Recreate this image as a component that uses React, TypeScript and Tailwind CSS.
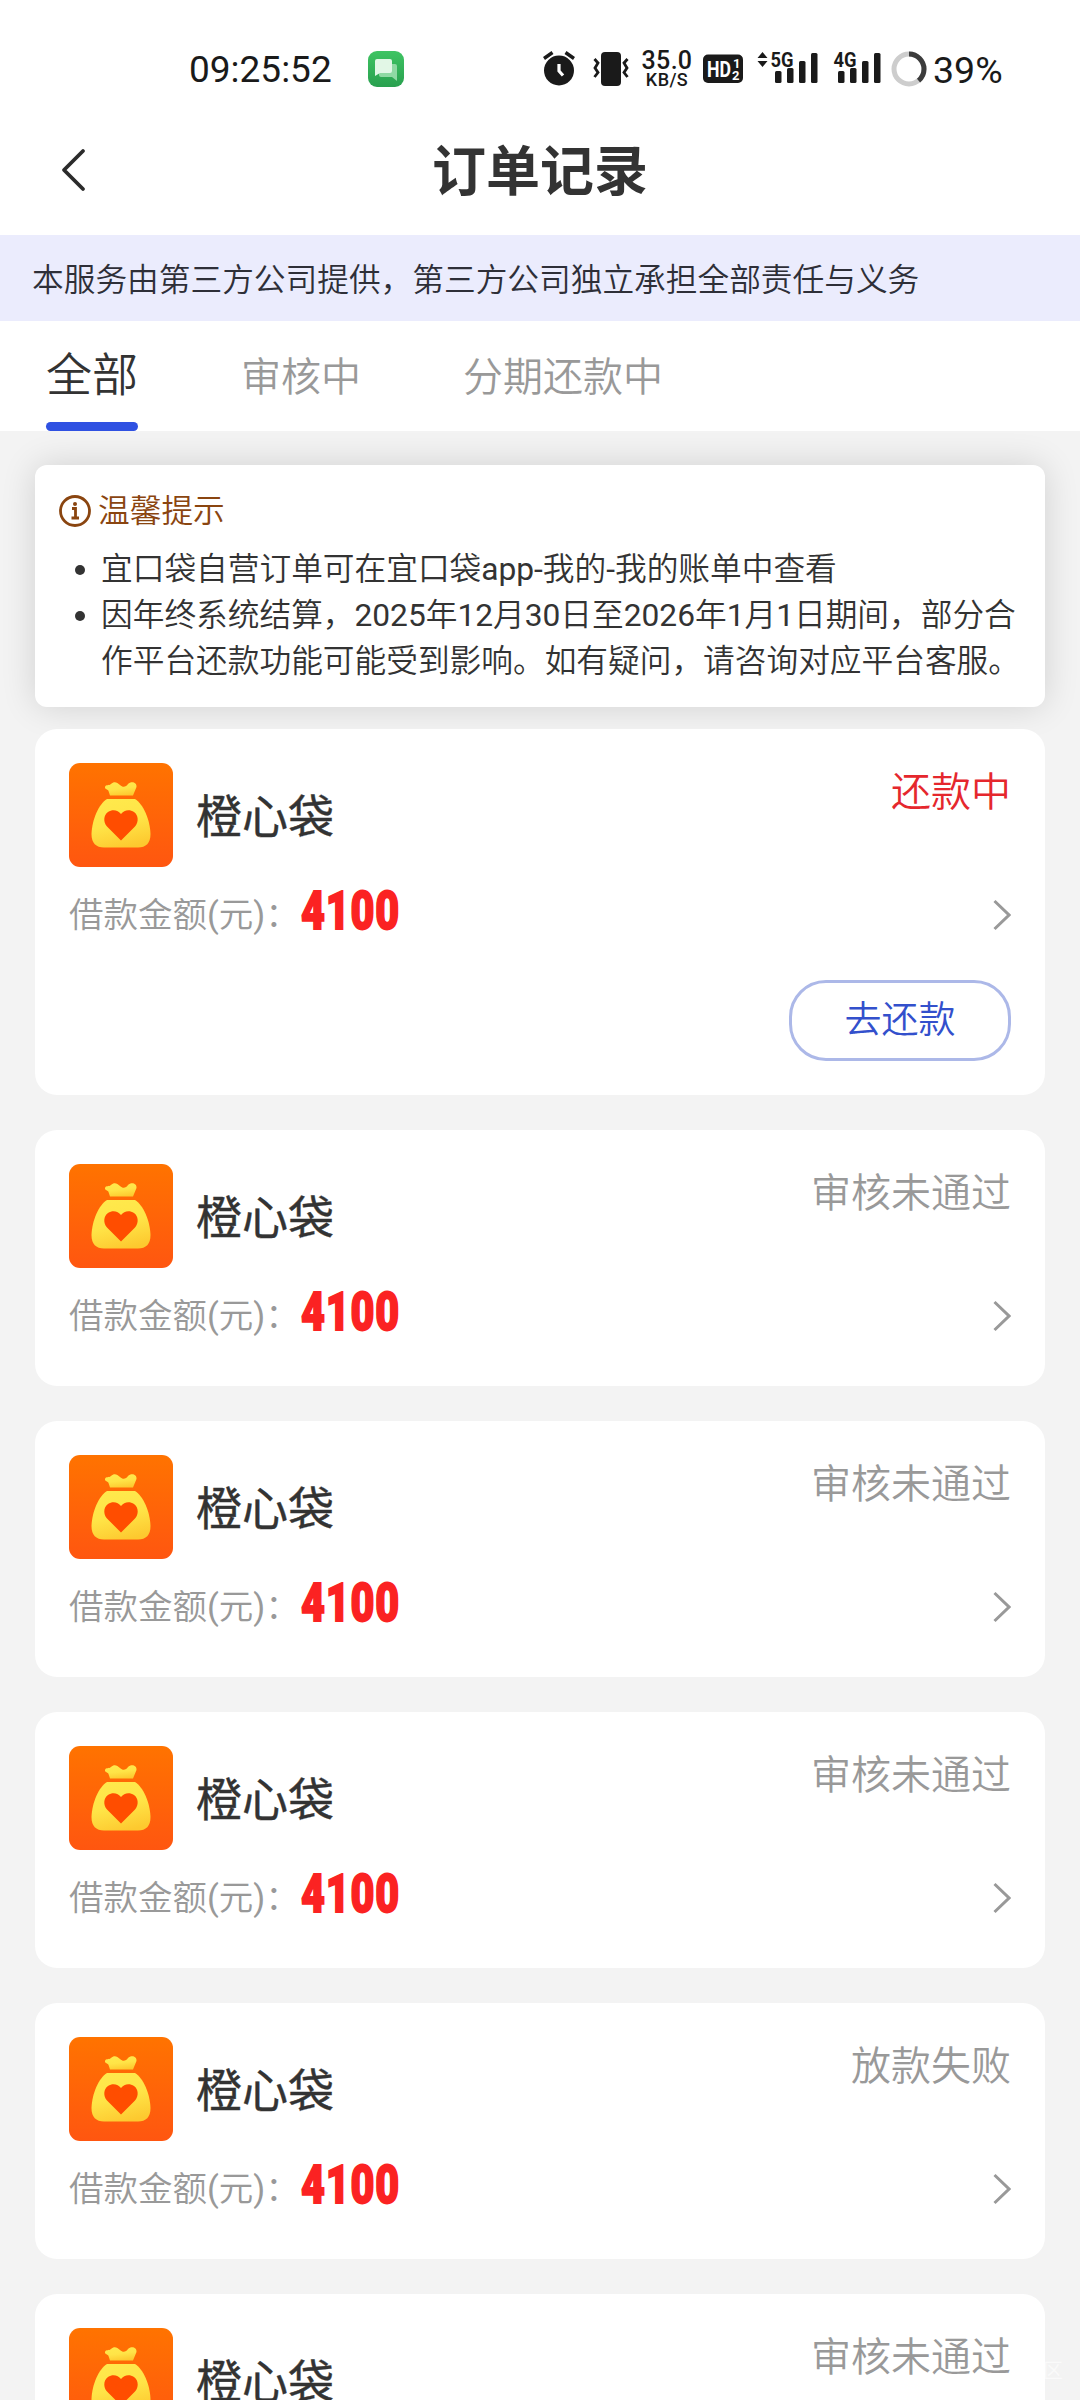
import { memo } from 'react'

interface Order {
  status: string
  active?: boolean
}

const ORDERS: Order[] = [
  { status: '还款中', active: true },
  { status: '审核未通过' },
  { status: '审核未通过' },
  { status: '审核未通过' },
  { status: '放款失败' },
  { status: '审核未通过' },
]

const SIGNAL_BARS = [
  { x: 0, y: 20, h: 12 },
  { x: 12, y: 17, h: 15 },
  { x: 24, y: 10, h: 22 },
  { x: 36, y: 2, h: 30 },
]

function Signal({ label, className }: { label: string; className: string }) {
  return (
    <svg viewBox="0 0 60 38" className={className} fill="#1a1a1a">
      {label === '5G' && <path d="M5.5 1 10.5 7H0.5ZM5.5 16 10.5 10H0.5Z" />}
      <text
        x="13.5"
        y="15.5"
        fontSize="21"
        fontWeight="700"
        fontFamily="Roboto"
        textLength="23"
        lengthAdjust="spacingAndGlyphs"
      >
        {label}
      </text>
      {SIGNAL_BARS.map((b) => (
        <rect key={b.x} x={b.x + 18} y={b.y} width="6.5" height={b.h} rx="1.5" />
      ))}
    </svg>
  )
}

function StatusBar() {
  return (
    <div className="flex h-[104px] items-start pt-[47px] pl-[189px] text-[#1a1a1a]">
      <span className="w-[145px] text-[37px] leading-[46px] whitespace-nowrap">
        09:25:52
      </span>
      <svg viewBox="0 0 36 36" className="mt-1 ml-[34px] size-9">
        <defs>
          <linearGradient id="msg" x1="0" y1="0" x2="0" y2="1">
            <stop offset="0" stopColor="#3fc463" />
            <stop offset="1" stopColor="#29a04f" />
          </linearGradient>
        </defs>
        <rect width="36" height="36" rx="9" fill="url(#msg)" />
        <path d="M13 13H27a2 2 0 0 1 2 2V30L24 26H13a2 2 0 0 1-2-2V15a2 2 0 0 1 2-2Z" fill="#8fd9a3" />
        <path d="M9 8H22a2 2 0 0 1 2 2V20a2 2 0 0 1-2 2H12L7 25V10a2 2 0 0 1 2-2Z" fill="#e2f7e6" />
      </svg>
      <svg viewBox="0 0 34 36" className="mt-1 ml-[138px] h-9 w-[34px]" fill="none" stroke="#1a1a1a">
        <circle cx="17" cy="19.5" r="15" fill="#1a1a1a" stroke="none" />
        <path d="M2 7.5 10.5 1.5M32 7.5 23.5 1.5" strokeWidth="3.4" />
        <path d="M17 13V20L21 24.5" stroke="#fff" strokeWidth="3.2" />
      </svg>
      <svg viewBox="0 0 36 36" className="mt-1 ml-[17px] h-9 w-9" fill="none" stroke="#1a1a1a">
        <rect x="8" y="1" width="20" height="34" rx="4" fill="#1a1a1a" stroke="none" />
        <path
          d="M1.5 8 5 12 2 17 5 21.5 1.5 26M34.5 8 31 12 34 17 31 21.5 34.5 26"
          strokeWidth="2.8"
        />
      </svg>
      <div className="mt-[3px] ml-[13px] flex w-[50px] flex-col items-center font-medium">
        <span className="text-[25px] leading-[21px] tracking-[0.3px]">35.0</span>
        <span className="text-[18px] leading-[18px] tracking-[0.4px]">KB/S</span>
      </div>
      <svg viewBox="0 0 40 30" className="mt-[7px] ml-[11px] h-[30px] w-10" fill="#fff">
        <rect y="0.5" width="40" height="28.5" rx="5" fill="#1a1a1a" />
        <g fontFamily="Roboto" fontWeight="700">
          <text x="4" y="23" fontSize="22" textLength="24" lengthAdjust="spacingAndGlyphs">
            HD
          </text>
          <text x="30" y="13.5" fontSize="13">1</text>
          <text x="29" y="25.5" fontSize="13">2</text>
        </g>
      </svg>
      <Signal label="5G" className="mt-1 ml-[14px] h-[38px] w-[60px] overflow-visible" />
      <Signal label="4G" className="mt-1 ml-[3px] h-[38px] w-[60px] overflow-visible" />
      <svg viewBox="0 0 36 36" className="mt-1 ml-[11px] size-9" fill="none" strokeWidth="5">
        <circle cx="18" cy="18" r="15" stroke="#cdcdcd" />
        <circle
          cx="18"
          cy="18"
          r="15"
          stroke="#3c3c3c"
          pathLength="100"
          strokeDasharray="39 61"
          transform="rotate(-90 18 18)"
        />
      </svg>
      <span className="ml-[6px] text-[37.5px] leading-[46px]">39%</span>
    </div>
  )
}

const AppLogo = memo(function AppLogo() {
  return (
    <svg viewBox="0 0 104 104" className="size-[104px] rounded-[11px]">
      <defs>
        <linearGradient id="logoBg" x1="0" y1="0" x2="0" y2="1">
          <stop offset="0" stopColor="#ff7300" />
          <stop offset="1" stopColor="#ff5610" />
        </linearGradient>
        <linearGradient id="bag" x1="0.3" y1="0" x2="0.6" y2="1">
          <stop offset="0" stopColor="#ffe94c" />
          <stop offset="0.5" stopColor="#ffe447" />
          <stop offset="1" stopColor="#fdc92f" />
        </linearGradient>
      </defs>
      <rect width="104" height="104" fill="url(#logoBg)" />
      <path
        d="M36 24C37 21 40 23 42 21C45 18 48 19 51 22C54 25 57 24 59 21C62 18 68 19 67.5 24L64 32.5H41L39.5 28C39 26 35.5 26.5 36 24Z"
        fill="url(#bag)"
      />
      <path
        d="M38 36H66C74 41 81 56 81.5 71C81.5 80 77 84.5 69 84.5H35C27 84.5 22.5 80 22.5 71C23 56 30 41 38 36Z"
        fill="url(#bag)"
      />
      <path
        d="M52 77.5 38 63.5C34 59 34.5 52 39 49C43.5 46 49 47 52 51C55 47 60.5 46 65 49C69.500 52 70 59 66 63.5Z"
        fill="#ff4d00"
      />
    </svg>
  )
})

function OrderCard({ status, active }: Order) {
  return (
    <div
      className={`relative shrink-0 rounded-[22px] bg-white px-[34px] pt-[34px] ${active ? 'h-[366px]' : 'h-[256px]'}`}
    >
      <div className="flex h-[104px]">
        <AppLogo />
        <span className="mt-[21px] ml-[23px] font-[Roboto,'Noto_Sans_CJK_SC',sans-serif] text-[46px] leading-[66px] text-[#333] [-webkit-text-stroke:0.4px_#333]">
          橙心袋
        </span>
        <span
          className={`ml-auto text-[40px] leading-[59px] ${active ? 'text-[#e5272d]' : 'text-[#999]'}`}
        >
          {status}
        </span>
      </div>
      <div className="mt-[17px] flex h-[62px] items-center">
        <span className="w-[232px] text-[34.5px] leading-[50px] whitespace-nowrap text-[#999]">借款金额(元)：</span>
        <span className="mb-[8px] w-[100px] origin-left scale-x-[0.78] text-[53px] leading-[60px] font-black tracking-[1px] text-[#fb2222] [-webkit-text-stroke:1.8px_#fb2222]">
          4100
        </span>
        <svg viewBox="0 0 18 32" className="ml-auto h-8 w-[18px]" fill="none" stroke="#999" strokeWidth="3">
          <path d="M1.5 2 16 16 1.5 30" />
        </svg>
      </div>
      {active && (
        <button className="mt-[34px] ml-auto flex h-[81px] w-[222px] items-center justify-center rounded-[37px] border-3 border-[#acb8e8] text-[37px] text-[#3350cc]">
          去还款
        </button>
      )}
    </div>
  )
}

function Tip() {
  return (
    <div className="relative mt-[34px] h-[242px] rounded-[12px] bg-white pt-[24px] pl-[24px] text-[31.7px] leading-[46px] shadow-[0_0_35px_rgba(0,0,0,0.14)]">
      <div className="flex items-center text-[#8a4510]">
        <svg viewBox="0 0 32 32" className="mr-[7px] mb-0.5 size-8" fill="none" stroke="#8a4510" strokeWidth="2.8">
          <circle cx="16" cy="16" r="14.5" />
          <path d="M13 13.5H16.5V23M12.5 23H20" />
          <circle cx="16" cy="9" r="2" fill="#8a4510" stroke="none" />
        </svg>
        温馨提示
      </div>
      <ul className="mt-3 text-[#333]">
        <li className="flex">
          <span className="mt-[18px] mr-4 ml-4 size-2.5 rounded-full bg-[#333]" />
          宜口袋自营订单可在宜口袋app-我的-我的账单中查看
        </li>
        <li className="flex">
          <span className="mt-[18px] mr-4 ml-4 size-2.5 rounded-full bg-[#333]" />
          <span className="whitespace-nowrap">
            因年终系统结算，2025年12月30日至2026年1月1日期间，部分合
            <br />
            作平台还款功能可能受到影响。如有疑问，请咨询对应平台客服。
          </span>
        </li>
      </ul>
    </div>
  )
}

export default function App() {
  return (
    <div className="relative flex h-[2400px] w-[1080px] flex-col overflow-hidden bg-[#f3f3f3] font-[Roboto,'Noto_Sans_CJK_SC_DemiLight','Noto_Sans_CJK_SC',sans-serif]">
      <header className="h-[235px] bg-white">
        <StatusBar />
        <div className="flex h-[131px] items-center">
          <svg viewBox="0 0 26 44" className="ml-[61px] h-[44px] w-[26px]" fill="none" stroke="#2b2b2b" strokeWidth="3.8" strokeLinecap="round" strokeLinejoin="round">
            <path d="M22 3 3 22 22 41" />
          </svg>
          <h1 className="mt-[5px] mr-[87px] flex-1 text-center font-[Roboto,'Noto_Sans_CJK_SC',sans-serif] text-[54px] font-bold text-[#333]">
            订单记录
          </h1>
        </div>
      </header>
      <div className="h-[86px] bg-[#ebecfd] pl-8 text-[31.7px] leading-[91px] text-[#2e2f38]">
        本服务由第三方公司提供，第三方公司独立承担全部责任与义务
      </div>
      <nav className="flex h-[110px] items-start bg-white pl-[46px] text-[40px] leading-[113px] text-[#999]">
        <div className="flex h-[110px] flex-col justify-between text-[46px] text-[#333]">
          <span className="h-[101px] leading-[108px]">全部</span>
          <div className="h-[9px] rounded-[5px] bg-[#2f51e2]" />
        </div>
        <span className="ml-[103px]">审核中</span>
        <span className="ml-[102px]">分期还款中</span>
      </nav>
      <main className="px-[35px]">
        <Tip />
        <div className="mt-[22px] flex flex-col gap-[35px]">
          {ORDERS.map((order, i) => (
            <OrderCard key={i} {...order} />
          ))}
        </div>
      </main>
      <span className="absolute right-[17px] bottom-[14px] text-[20px] leading-[30px] text-white/60">区</span>
    </div>
  )
}
